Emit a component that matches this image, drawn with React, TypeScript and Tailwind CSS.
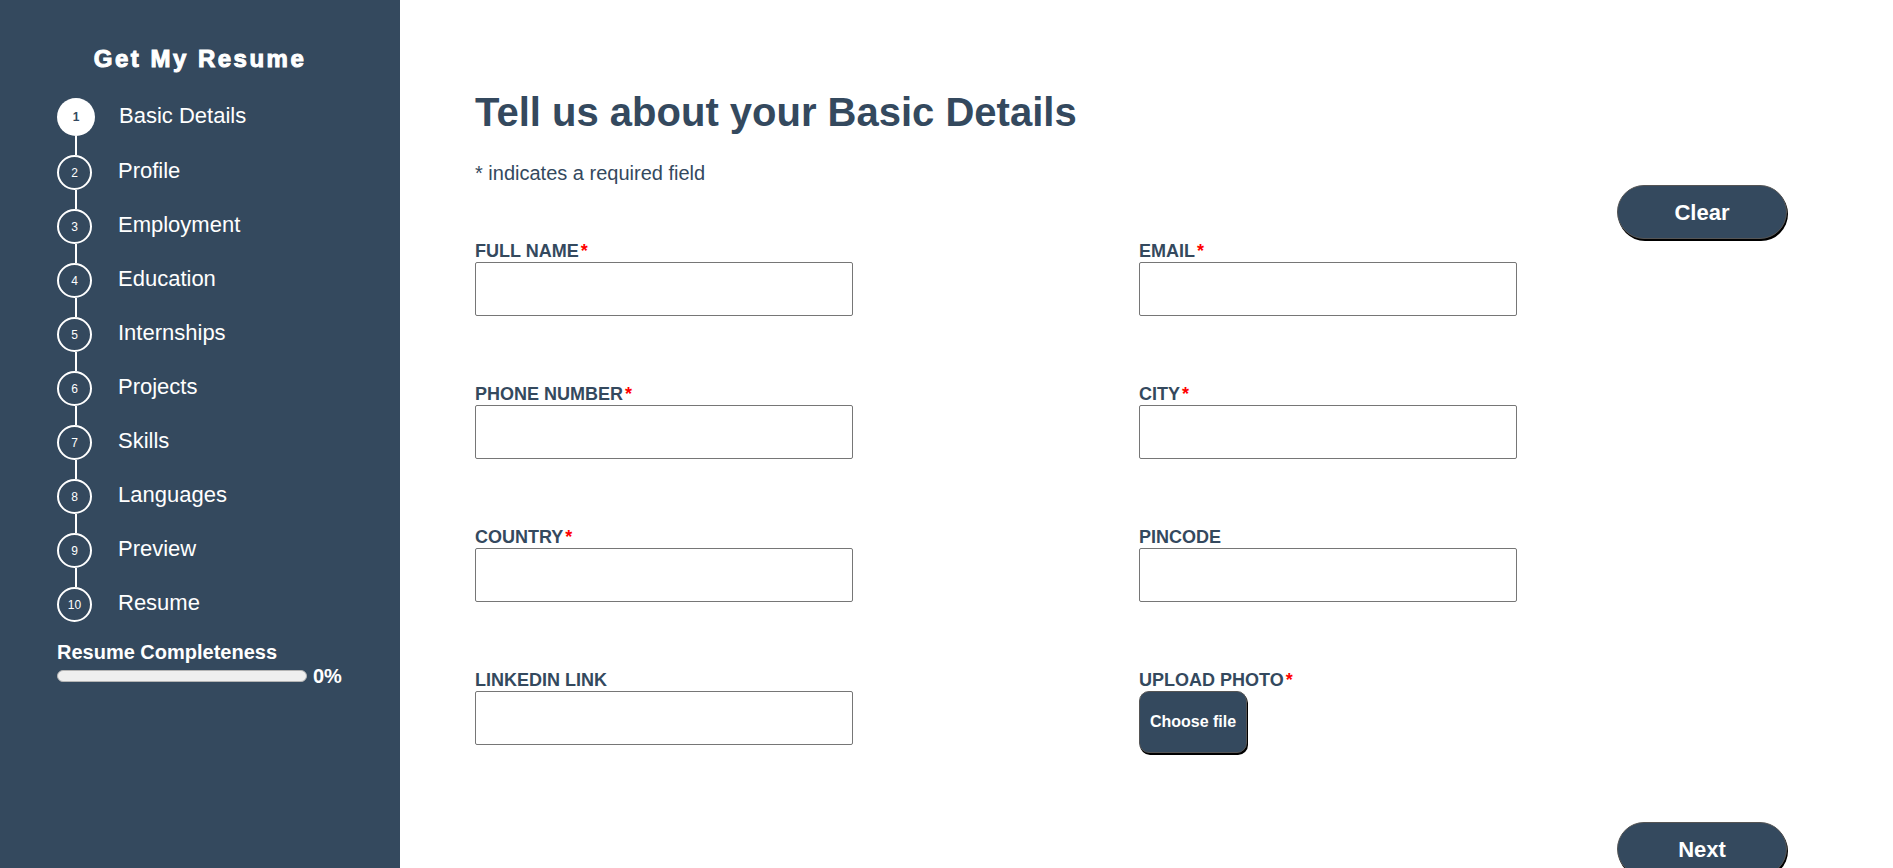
import React from "react";

const steps = [
  "Basic Details",
  "Profile",
  "Employment",
  "Education",
  "Internships",
  "Projects",
  "Skills",
  "Languages",
  "Preview",
  "Resume",
];

const fields = [
  { label: "FULL NAME", required: true },
  { label: "EMAIL", required: true },
  { label: "PHONE NUMBER", required: true },
  { label: "CITY", required: true },
  { label: "COUNTRY", required: true },
  { label: "PINCODE", required: false },
  { label: "LINKEDIN LINK", required: false },
  { label: "UPLOAD PHOTO", required: true, file: true },
];

function Step({ index, name, active }: { index: number; name: string; active: boolean }) {
  return (
    <div className={`flex items-center ${active ? "h-[38px]" : "h-[35px]"}`}>
      <div className="w-[38px] flex">
        {active ? (
          <div className="w-[38px] h-[38px] rounded-full bg-white flex items-center justify-center text-[12px] font-bold text-[#34495e]">
            {index}
          </div>
        ) : (
          <div className="w-[35px] h-[35px] rounded-full border-2 border-white flex items-center justify-center text-[12px] text-white">
            {index}
          </div>
        )}
      </div>
      <span className={`${active ? "ml-[24px]" : "ml-[23px]"} pb-[4px] text-[22px] leading-[25px] text-white`}>{name}</span>
    </div>
  );
}

function Sidebar() {
  return (
    <aside className="w-[400px] shrink-0 bg-[#34495e] pt-[43px] pl-[57px]">
      <h2 className="-ml-[57px] text-center text-[24px] leading-[32px] font-bold tracking-[2.5px] text-white [-webkit-text-stroke:1px_white]">
        Get My Resume
      </h2>
      <div className="mt-[23px] flex flex-col">
        {steps.map((s, i) => (
          <React.Fragment key={s}>
            {i > 0 && <div className="ml-[18px] w-[2px] h-[19px] bg-white" />}
            <Step index={i + 1} name={s} active={i === 0} />
          </React.Fragment>
        ))}
      </div>
      <div className="mt-[18px] text-[20px] leading-[24px] font-bold text-white">Resume Completeness</div>
      <div className="flex items-center h-[24px]">
        <div className="w-[250px] h-[12px] rounded-full bg-[#efefef] border border-[#b5b5b5]" />
        <span className="ml-[6px] text-[20px] font-bold text-white">0%</span>
      </div>
    </aside>
  );
}

function Field({ label, required, file }: { label: string; required: boolean; file?: boolean }) {
  return (
    <div className="flex flex-col items-start">
      <label className="text-[18px] leading-[21px] font-bold text-[#34495e]">
        {label}
        {required && <span className="ml-[2px] text-[#ff0000]">*</span>}
      </label>
      {file ? (
        <button className="w-[108px] h-[62px] rounded-[10px] bg-[#34495e] border border-[#555] shadow-[1px_2px_0_#000] text-white text-[16px] font-bold">
          Choose file
        </button>
      ) : (
        <input
          type="text"
          className="w-[378px] h-[54px] border border-[#767676] rounded-[2px] bg-white px-2 outline-none"
        />
      )}
    </div>
  );
}

export default function App() {
  return (
    <div className="flex min-h-screen bg-white font-['Liberation_Sans',Arial,sans-serif]">
      <Sidebar />
      <main className="flex-1 pt-[88px] pl-[75px] pr-[106px] pb-[20px]">
        <h1 className="text-[40px] leading-[48px] font-bold text-[#34495e]">Tell us about your Basic Details</h1>
        <p className="mt-[25px] text-[20px] leading-[24px] text-[#34495e]">* indicates a required field</p>
        <div className="flex justify-end">
          <button className="w-[170px] h-[54px] rounded-full bg-[#34495e] border border-[#555] shadow-[1px_2px_0_#000] text-white text-[22px] font-bold">
            Clear
          </button>
        </div>
        <div className="mt-[2px] grid grid-cols-[664px_1fr] gap-y-[68px]">
          {fields.map((f) => (
            <Field key={f.label} label={f.label} required={f.required} file={f.file} />
          ))}
        </div>
        <div className="mt-[69px] flex justify-end">
          <button className="w-[170px] h-[54px] rounded-full bg-[#34495e] border border-[#555] shadow-[1px_2px_0_#000] text-white text-[22px] font-bold">
            Next
          </button>
        </div>
      </main>
    </div>
  );
}
